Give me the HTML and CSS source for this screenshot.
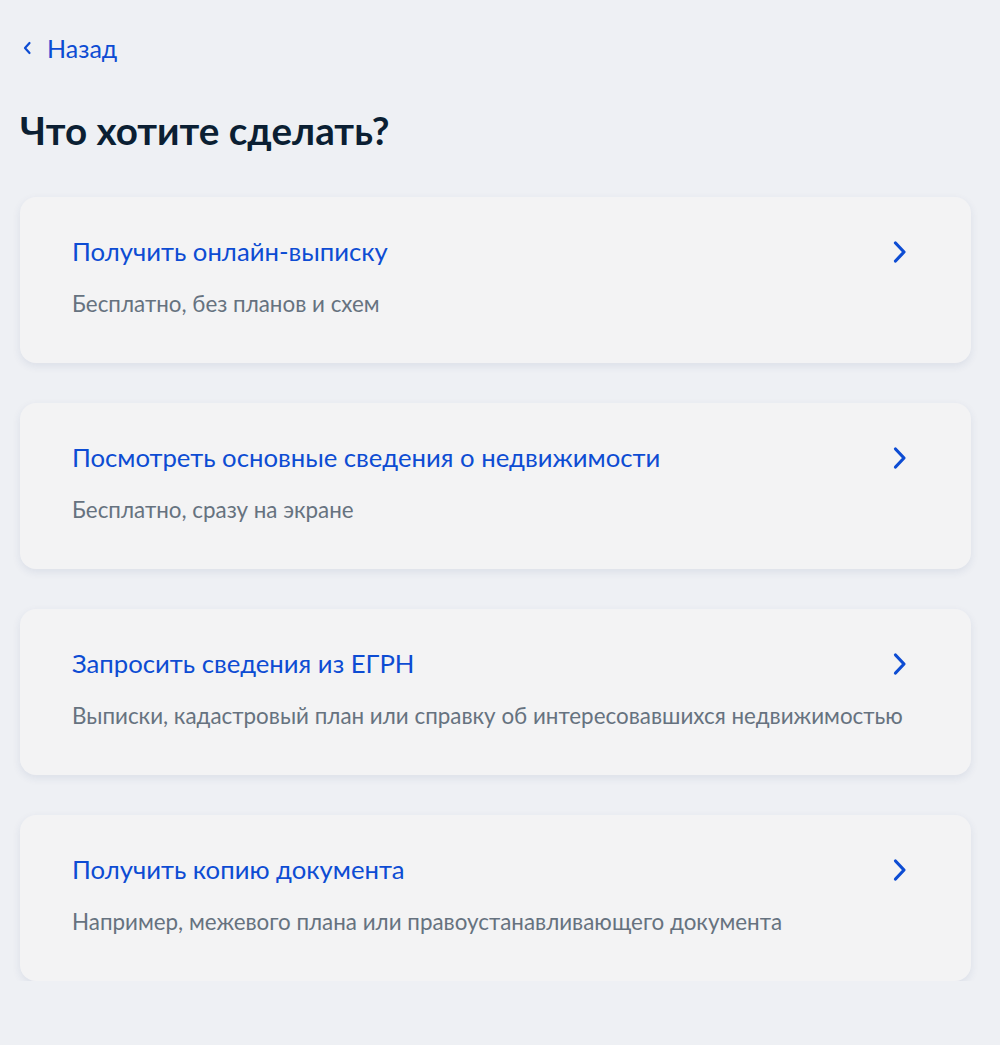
FILE: index.html
```html
<!DOCTYPE html>
<html lang="ru">
<head>
<meta charset="utf-8">
<title>Что хотите сделать?</title>
<link rel="stylesheet" href="styles.css">
</head>
<body>
<div class="page">
  <a class="back" href="#">
    <svg class="back-icon" width="10" height="14" viewBox="0 0 10 14"><path d="M7.5 2 L3 7 L7.5 12" fill="none" stroke="#0d4cd3" stroke-width="2.2" stroke-linecap="round" stroke-linejoin="round"/></svg>
    <span>Назад</span>
  </a>
  <h1 class="title">Что хотите сделать?</h1>
  <div class="list">
    <a class="card" href="#">
      <div class="card-title">Получить онлайн-выписку</div>
      <svg class="chev" width="16" height="24" viewBox="0 0 16 24"><path d="M3.5 3 L12 12 L3.5 21" fill="none" stroke="#0d4cd3" stroke-width="3.2" stroke-linecap="round" stroke-linejoin="round"/></svg>
      <div class="card-sub">Бесплатно, без планов и схем</div>
    </a>
    <a class="card" href="#">
      <div class="card-title">Посмотреть основные сведения о недвижимости</div>
      <svg class="chev" width="16" height="24" viewBox="0 0 16 24"><path d="M3.5 3 L12 12 L3.5 21" fill="none" stroke="#0d4cd3" stroke-width="3.2" stroke-linecap="round" stroke-linejoin="round"/></svg>
      <div class="card-sub">Бесплатно, сразу на экране</div>
    </a>
    <a class="card" href="#">
      <div class="card-title">Запросить сведения из ЕГРН</div>
      <svg class="chev" width="16" height="24" viewBox="0 0 16 24"><path d="M3.5 3 L12 12 L3.5 21" fill="none" stroke="#0d4cd3" stroke-width="3.2" stroke-linecap="round" stroke-linejoin="round"/></svg>
      <div class="card-sub">Выписки, кадастровый план или справку об интересовавшихся недвижимостью</div>
    </a>
    <a class="card" href="#">
      <div class="card-title">Получить копию документа</div>
      <svg class="chev" width="16" height="24" viewBox="0 0 16 24"><path d="M3.5 3 L12 12 L3.5 21" fill="none" stroke="#0d4cd3" stroke-width="3.2" stroke-linecap="round" stroke-linejoin="round"/></svg>
      <div class="card-sub">Например, межевого плана или правоустанавливающего документа</div>
    </a>
  </div>
</div>
</body>
</html>
```

FILE: styles.css
```css
html, body {
  margin: 0;
  padding: 0;
  background: #eef0f4;
}
body {
  font-family: Lato, "Noto Sans", sans-serif;
  color: #0b1f33;
}
.page {
  padding: 30px 29px 0 20px;
}
.back {
  display: inline-flex;
  align-items: center;
  gap: 15px;
  text-decoration: none;
  color: #0d4cd3;
  font-size: 25px;
  line-height: 36px;
  padding-left: 2px;
}
.back-icon {
  display: block;
}
.title {
  margin: 42px 0 0 0;
  font-size: 38.6px;
  line-height: 44px;
  font-weight: 700;
  color: #0b1f33;
}
.list {
  margin-top: 45px;
  display: flex;
  flex-direction: column;
  gap: 40px;
}
.card {
  display: grid;
  grid-template-columns: 1fr auto;
  grid-template-rows: auto auto;
  align-content: start;
  align-items: start;
  height: 166px;
  box-sizing: border-box;
  padding: 36px 63px 0 52px;
  background: #f3f3f4;
  border-radius: 16px;
  box-shadow: 0 3px 8px rgba(30, 60, 110, 0.09);
  text-decoration: none;
}
.card-title {
  grid-column: 1;
  grid-row: 1;
  font-size: 25.7px;
  line-height: 36px;
  color: #0d4cd3;
}
.chev {
  grid-column: 2;
  grid-row: 1;
  display: block;
  margin-top: 7px;
}
.card-sub {
  grid-column: 1 / 3;
  grid-row: 2;
  margin-top: 21px;
  font-size: 22.4px;
  line-height: 28px;
  color: #66727f;
  white-space: nowrap;
}
```
